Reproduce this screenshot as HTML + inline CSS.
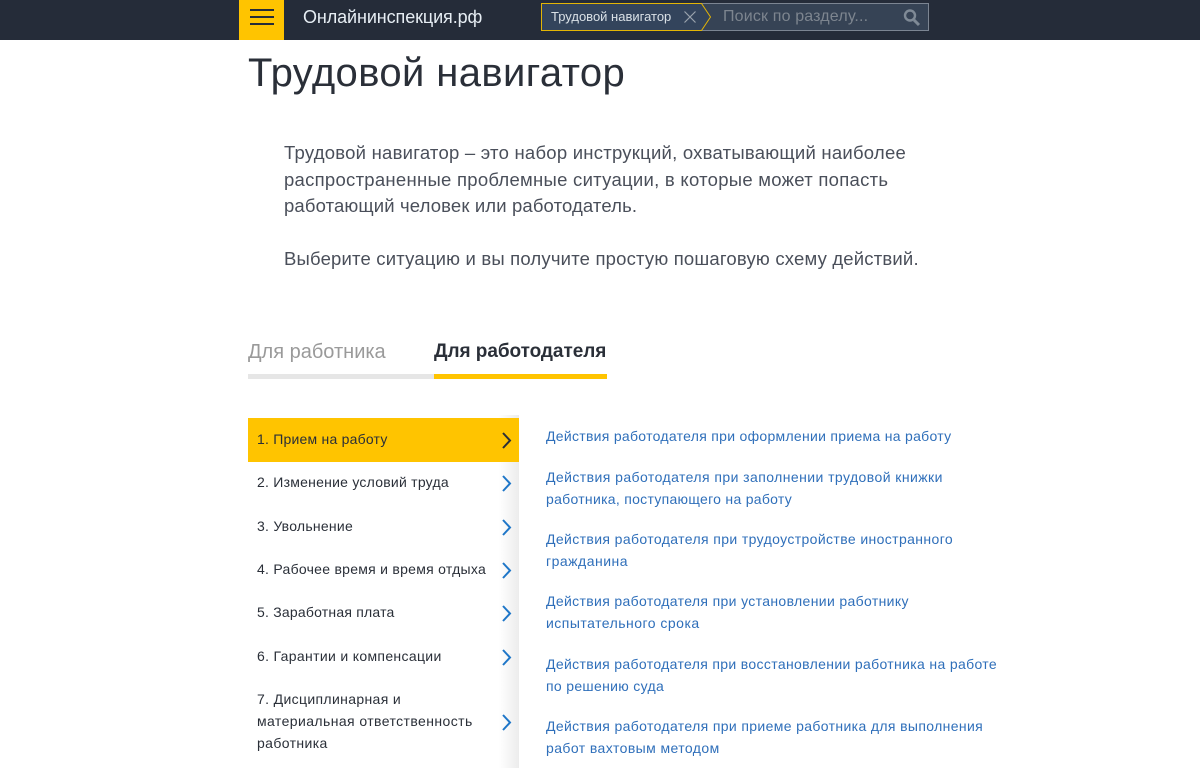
<!DOCTYPE html>
<html lang="ru"><head><meta charset="utf-8"><title>Трудовой навигатор</title>
<style>
html,body{margin:0;padding:0;background:#fff;width:1200px;height:768px;overflow:hidden;font-family:"Liberation Sans",sans-serif}
.t{position:absolute;white-space:nowrap;margin:0}
.b{position:absolute}
.m{font-size:14px;color:#2a2f38;line-height:22px}
.l{font-size:14px;color:#2f6fba;line-height:22px}
.p{font-size:18.5px;color:#4a4f5a;line-height:27px}
svg{position:absolute;overflow:visible}
</style></head><body>
<div class="b" style="left:0;top:0;width:1200px;height:40px;background:#252c39"></div>
<div class="b" style="left:239px;top:0;width:45px;height:40px;background:#ffc400"></div>
<div class="b" style="left:250px;top:9px;width:24px;height:2px;background:#252c39"></div>
<div class="b" style="left:250px;top:16px;width:24px;height:2px;background:#252c39"></div>
<div class="b" style="left:250px;top:23px;width:24px;height:2px;background:#252c39"></div>
<div class="t" style="left:303px;top:7px;font-size:18px;line-height:20px;color:#e6edf3;letter-spacing:-.1px">Онлайнинспекция.рф</div>
<svg style="left:541px;top:2px" width="390" height="30" viewBox="0 0 390 30">
<rect x=".5" y="1.5" width="387" height="27" fill="#364355" stroke="#7c8592"/>
<path d="M.5 1.5H160.5L169.5 15L160.5 28.5H.5Z" fill="#33445c" stroke="#e3b505"/>
<path d="M143.500 9.500L154.500 20.500M154.500 9.500L143.500 20.500" stroke="#9aa3ad" stroke-width="1.2" fill="none"/>
<circle cx="369" cy="13.500" r="5" fill="none" stroke="#7f8a96" stroke-width="2.400"/>
<path d="M373 18L378 23" stroke="#7f8a96" stroke-width="3" fill="none"/>
</svg>
<div class="t" style="left:551px;top:9px;font-size:13px;line-height:16px;color:#d9e0e6">Трудовой навигатор</div>
<div class="t" style="left:723px;top:7px;font-size:16px;line-height:20px;color:#7d858f;letter-spacing:.16px">Поиск по разделу...</div>

<h1 class="t" style="left:248px;top:49px;font-size:40px;line-height:48px;font-weight:400;color:#2a2f38;letter-spacing:.39px">Трудовой навигатор</h1>
<div class="t p" style="left:284px;top:139px;letter-spacing:.24px">Трудовой навигатор – это набор инструкций, охватывающий наиболее</div>
<div class="t p" style="left:284px;top:166px;letter-spacing:.27px">распространенные проблемные ситуации, в которые может попасть</div>
<div class="t p" style="left:284px;top:192px;letter-spacing:.135px">работающий человек или работодатель.</div>
<div class="t p" style="left:284px;top:245px;letter-spacing:.185px">Выберите ситуацию и вы получите простую пошаговую схему действий.</div>

<div class="t" style="left:248px;top:340px;font-size:20px;line-height:24px;color:#9a9a9a">Для работника</div>
<div class="t" style="left:434px;top:340px;font-size:19px;line-height:24px;font-weight:700;color:#2a2f38;letter-spacing:-.05px">Для работодателя</div>
<div class="b" style="left:248px;top:374px;width:186px;height:5px;background:#e6e6e6"></div>
<div class="b" style="left:434px;top:374px;width:173px;height:5px;background:#ffc400"></div>

<div class="b" style="left:499px;top:415px;width:20px;height:353px;background:linear-gradient(90deg,#fff,#ececec)"></div>
<div class="b" style="left:248px;top:418px;width:271px;height:44px;background:#ffc400"></div>

<div class="t m" style="left:257px;top:428px;letter-spacing:.22px">1. Прием на работу</div>
<div class="t m" style="left:257px;top:471px;letter-spacing:.24px">2. Изменение условий труда</div>
<div class="t m" style="left:257px;top:515px;letter-spacing:.25px">3. Увольнение</div>
<div class="t m" style="left:257px;top:558px;letter-spacing:.27px">4. Рабочее время и время отдыха</div>
<div class="t m" style="left:257px;top:601px;letter-spacing:.21px">5. Заработная плата</div>
<div class="t m" style="left:257px;top:645px;letter-spacing:.33px">6. Гарантии и компенсации</div>
<div class="t m" style="left:257px;top:688px;letter-spacing:.35px">7. Дисциплинарная и</div>
<div class="t m" style="left:257px;top:710px;letter-spacing:.41px">материальная ответственность</div>
<div class="t m" style="left:257px;top:732px;letter-spacing:.38px">работника</div>

<svg style="left:0;top:0" width="1200" height="768" fill="none" stroke-width="2">
<path d="M503 433L510 440.500L503 448" stroke="#2a2f38"/>
<path d="M503 476L510 483.500L503 491" stroke="#1e76c8"/>
<path d="M503 520L510 527.500L503 535" stroke="#1e76c8"/>
<path d="M503 563L510 570.500L503 578" stroke="#1e76c8"/>
<path d="M503 606L510 613.500L503 621" stroke="#1e76c8"/>
<path d="M503 650L510 657.500L503 665" stroke="#1e76c8"/>
<path d="M503 715L510 722.500L503 730" stroke="#1e76c8"/>
</svg>

<div class="t l" style="left:546px;top:425px;letter-spacing:.29px">Действия работодателя при оформлении приема на работу</div>
<div class="t l" style="left:546px;top:466px;letter-spacing:.43px">Действия работодателя при заполнении трудовой книжки</div>
<div class="t l" style="left:546px;top:488px;letter-spacing:.29px">работника, поступающего на работу</div>
<div class="t l" style="left:546px;top:528px;letter-spacing:.38px">Действия работодателя при трудоустройстве иностранного</div>
<div class="t l" style="left:546px;top:550px;letter-spacing:.5px">гражданина</div>
<div class="t l" style="left:546px;top:590px;letter-spacing:.35px">Действия работодателя при установлении работнику</div>
<div class="t l" style="left:546px;top:612px;letter-spacing:.48px">испытательного срока</div>
<div class="t l" style="left:546px;top:653px;letter-spacing:.34px">Действия работодателя при восстановлении работника на работе</div>
<div class="t l" style="left:546px;top:675px;letter-spacing:.32px">по решению суда</div>
<div class="t l" style="left:546px;top:715px;letter-spacing:.36px">Действия работодателя при приеме работника для выполнения</div>
<div class="t l" style="left:546px;top:737px;letter-spacing:.41px">работ вахтовым методом</div>
</body></html>
